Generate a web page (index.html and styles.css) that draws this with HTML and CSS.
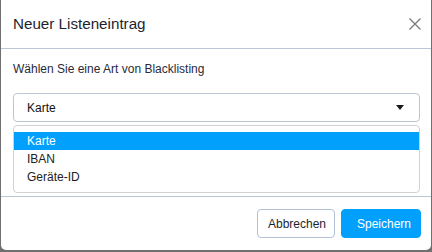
FILE: index.html
```html
<!DOCTYPE html>
<html lang="de">
<head>
<meta charset="utf-8">
<title>Neuer Listeneintrag</title>
<link rel="stylesheet" href="styles.css">
</head>
<body>
<div class="modal">
  <div class="modal-header">
    <h1 class="modal-title">Neuer Listeneintrag</h1>
    <button class="close" aria-label="Schließen">
      <svg width="12" height="12" viewBox="0 0 12 12"><path d="M0.5 0.5 L11.5 11.5 M11.5 0.5 L0.5 11.5" stroke="#7a7a7a" stroke-width="1.3" fill="none"/></svg>
    </button>
  </div>
  <div class="modal-body">
    <p class="label">Wählen Sie eine Art von Blacklisting</p>
    <div class="select">
      <span>Karte</span>
      <span class="caret"></span>
    </div>
    <ul class="options">
      <li class="option selected">Karte</li>
      <li class="option">IBAN</li>
      <li class="option">Geräte-ID</li>
    </ul>
  </div>
  <div class="modal-footer">
    <button class="btn btn-cancel">Abbrechen</button>
    <button class="btn btn-save">Speichern</button>
  </div>
</div>
</body>
</html>
```
FILE: styles.css
```css
html, body {
  margin: 0;
  padding: 0;
}
body {
  background: #6f6f6f;
  height: 252px;
  overflow: hidden;
  font-family: "Liberation Sans", Arial, sans-serif;
  color: #222;
}
.modal {
  margin-left: 1px;
  width: 430px;
  background: #fff;
  border-radius: 0 0 5px 5px;
  display: flex;
  flex-direction: column;
}
.modal-header {
  display: flex;
  align-items: center;
  justify-content: space-between;
  padding: 15px 10px 15px 12px;
  border-bottom: 1px solid #b8c6d6;
}
.modal-title {
  margin: 0;
  font-size: 15.2px;
  line-height: 18px;
  font-weight: normal;
  color: #1d1f2e;
}
.close {
  border: 0;
  background: none;
  padding: 0;
  width: 12px;
  height: 12px;
  display: flex;
}
.modal-body {
  padding: 12px 11px 3px 12px;
  display: flex;
  flex-direction: column;
}
.label {
  margin: 0 0 16px 0;
  font-size: 12px;
  line-height: 16px;
  color: #2a2a3a;
}
.select {
  height: 27px;
  border: 1px solid #bac6d4;
  border-radius: 4px;
  display: flex;
  align-items: center;
  justify-content: space-between;
  padding: 0 15px 0 13px;
  font-size: 12px;
  color: #111;
}
.caret {
  width: 0;
  height: 0;
  border-left: 4.5px solid transparent;
  border-right: 4.5px solid transparent;
  border-top: 5px solid #1a1a1a;
}
.options {
  list-style: none;
  margin: 3px 0 0 0;
  padding: 6px 0;
  border: 1px solid #d2d2d2;
  border-radius: 4px;
}
.option {
  height: 18px;
  line-height: 18px;
  padding-left: 13px;
  font-size: 12px;
  color: #222;
}
.option.selected {
  background: #02a0fd;
  color: #fff;
}
.modal-footer {
  border-top: 1px solid #b8c6d6;
  padding: 12px 10px 12px 12px;
  display: flex;
  justify-content: flex-end;
  gap: 6px;
}
.btn {
  height: 29px;
  border-radius: 4px;
  font-family: "Liberation Sans", Arial, sans-serif;
  font-size: 12px;
  padding: 0 10px;
  cursor: pointer;
}
.btn-cancel {
  width: 78px;
  background: #fff;
  border: 1px solid #b3c2d6;
  color: #1d1f2e;
}
.btn-save {
  width: 80px;
  background: #02a0fd;
  border: 1px solid #02a0fd;
  color: #fff;
  padding-left: 15px;
}
```
